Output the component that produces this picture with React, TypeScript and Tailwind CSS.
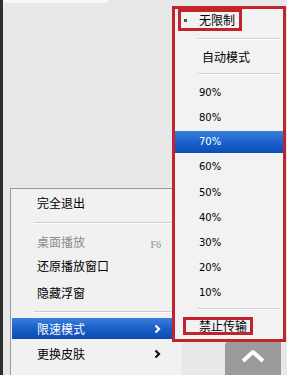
import React from 'react';

const cjk = '"Noto Sans CJK SC", "DejaVu Sans", sans-serif';
const latin = '"DejaVu Sans", "Liberation Sans", sans-serif';

const Chevron: React.FC<{ color: string }> = ({ color }) => (
  <svg width="7" height="10" viewBox="0 0 7 10" className="block">
    <polyline points="1.5,1.5 5,5 1.5,8.5" fill="none" stroke={color} strokeWidth="2.2" />
  </svg>
);

const LeftRow: React.FC<{ label: string; h: string; right?: React.ReactNode; muted?: boolean; active?: boolean }> = ({ label, h, right, muted, active }) => (
  <div
    className={`flex items-center pl-[25px] pr-[21px] ${h} ${
      active ? 'bg-gradient-to-b from-[#3b7fdc] via-[#1a5fc8] to-[#0c4ab2] text-white' : muted ? 'text-[#8c8c8c]' : 'text-black'
    }`}
  >
    <span className="text-[12px] leading-none" style={{ fontFamily: cjk }}>{label}</span>
    <span className="ml-auto">{right}</span>
  </div>
);

const Sep: React.FC<{ h: string; cls: string }> = ({ h, cls }) => (
  <div className={`flex items-center ${h}`}>
    <div className={`${cls} border-t border-[#cfcfcf] border-b border-b-white`} />
  </div>
);

const PctRow: React.FC<{ label: string; h: string; active?: boolean }> = ({ label, h, active }) => (
  <div
    className={`flex items-center pl-[24px] ${h} ${
      active ? 'bg-gradient-to-b from-[#3a80de] via-[#1a62cc] to-[#0d4db5] text-white' : 'text-black'
    }`}
  >
    <span className="text-[10px] leading-none" style={{ fontFamily: latin }}>{label}</span>
  </div>
);

export default function App() {
  return (
    <div className="relative w-[287px] h-[375px] overflow-hidden bg-[#e8e8e8] border-l-[3px] border-[#2e2e2e]">
      <div className="h-[3px] w-[105px] bg-[#f6f6f6]" />

      {/* main context menu */}
      <div className="absolute left-[7px] top-[188px] w-[172px] h-[200px] border-l border-t border-[#9a9a9a] bg-[#f1f1f1] pl-[1px] pt-[1px]">
        <LeftRow label="完全退出" h="h-[26px]" />
        <Sep h="h-[14px]" cls="ml-[22px] w-[140px]" />
        <LeftRow
          label="桌面播放"
          h="h-[23px]"
          muted
          right={<span className="text-[10px] text-[#8c8c8c]" style={{ fontFamily: '"Liberation Serif", serif' }}>F6</span>}
        />
        <LeftRow label="还原播放窗口" h="h-[26px]" />
        <LeftRow label="隐藏浮窗" h="h-[27px]" />
        <Sep h="h-[12px]" cls="ml-[22px] w-[140px]" />
        <LeftRow label="限速模式" h="h-[21px]" active right={<Chevron color="#ffffff" />} />
        <LeftRow label="更换皮肤" h="h-[30px]" right={<Chevron color="#111111" />} />
      </div>

      {/* bottom right button */}
      <div className="absolute left-[222px] top-[342px] w-[56px] h-[40px] bg-[#9b9b9b] rounded-tl-[3px] flex justify-center pt-[7px]">
        <svg width="26" height="14" viewBox="0 0 26 14">
          <polyline points="3,12 13,3 23,12" fill="none" stroke="#ffffff" strokeWidth="4" strokeLinejoin="round" />
        </svg>
      </div>

      {/* speed submenu with red marking */}
      <div className="absolute left-[169px] top-[6px] w-[114px] h-[336px] border-[3px] border-[#c3232b] bg-[#f2f2f2] flex flex-col">
        <div className="h-[22px] flex">
          <div className="ml-[3px] w-[64px] h-[22px] border-[3px] border-[#c3232b] flex items-center">
            <div className="ml-[3px] w-[3px] h-[3px] bg-[#555]" />
            <span className="ml-[12px] text-[12px] leading-none text-black" style={{ fontFamily: cjk }}>无限制</span>
          </div>
        </div>
        <Sep h="h-[16px]" cls="ml-[23px] w-[82px]" />
        <div className="h-[20px] flex items-center pl-[27px]">
          <span className="text-[12px] leading-none text-black" style={{ fontFamily: cjk }}>自动模式</span>
        </div>
        <Sep h="h-[14px]" cls="ml-[23px] w-[82px]" />
        <PctRow label="90%" h="h-[24px]" />
        <PctRow label="80%" h="h-[26px]" />
        <PctRow label="70%" h="h-[22px]" active />
        <PctRow label="60%" h="h-[27px]" />
        <PctRow label="50%" h="h-[25px]" />
        <PctRow label="40%" h="h-[25px]" />
        <PctRow label="30%" h="h-[25px]" />
        <PctRow label="20%" h="h-[25px]" />
        <PctRow label="10%" h="h-[25px]" />
        <Sep h="h-[8px]" cls="ml-[23px] w-[82px]" />
        <div className="h-[26px] flex items-center">
          <div className="ml-[8px] w-[70px] h-[18px] border-[3px] border-[#c3232b] flex items-end pl-[13px]">
            <span className="text-[12px] leading-none text-black" style={{ fontFamily: cjk }}>禁止传输</span>
          </div>
        </div>
      </div>
    </div>
  );
}
